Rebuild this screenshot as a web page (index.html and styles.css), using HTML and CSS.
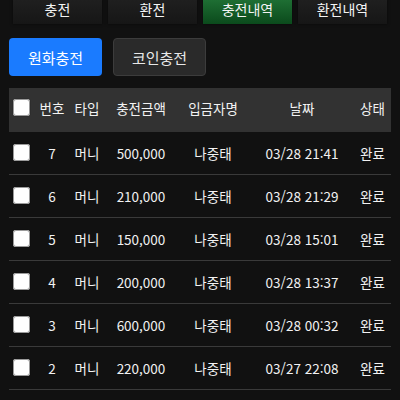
FILE: index.html
```html
<!DOCTYPE html>
<html lang="ko">
<head>
<meta charset="utf-8">
<link rel="stylesheet" href="styles.css">
</head>
<body>
<nav class="tabs">
  <div class="tab">충전</div>
  <div class="tab">환전</div>
  <div class="tab active">충전내역</div>
  <div class="tab">환전내역</div>
</nav>
<div class="btns">
  <button class="btn btn-blue">원화충전</button>
  <button class="btn btn-dark">코인충전</button>
</div>
<div class="table">
  <div class="row head">
    <span class="cb"></span><span>번호</span><span>타입</span><span>충전금액</span><span>입금자명</span><span>날짜</span><span>상태</span>
  </div>
  <div class="row"><span class="cb"></span><span>7</span><span>머니</span><span>500,000</span><span>나중태</span><span>03/28 21:41</span><span>완료</span></div>
  <div class="row"><span class="cb"></span><span>6</span><span>머니</span><span>210,000</span><span>나중태</span><span>03/28 21:29</span><span>완료</span></div>
  <div class="row"><span class="cb"></span><span>5</span><span>머니</span><span>150,000</span><span>나중태</span><span>03/28 15:01</span><span>완료</span></div>
  <div class="row"><span class="cb"></span><span>4</span><span>머니</span><span>200,000</span><span>나중태</span><span>03/28 13:37</span><span>완료</span></div>
  <div class="row"><span class="cb"></span><span>3</span><span>머니</span><span>600,000</span><span>나중태</span><span>03/28 00:32</span><span>완료</span></div>
  <div class="row"><span class="cb"></span><span>2</span><span>머니</span><span>220,000</span><span>나중태</span><span>03/27 22:08</span><span>완료</span></div>
</div>
</body>
</html>
```
FILE: styles.css
```css
* { box-sizing: border-box; }
html, body { margin: 0; padding: 0; }
body {
  background: #111111;
  color: #f2f2f2;
  font-family: "Noto Sans CJK KR", "Noto Sans", sans-serif;
  font-size: 13.5px;
  width: 400px;
  height: 400px;
  overflow: hidden;
}
.tabs {
  display: flex;
  gap: 6px;
  padding: 0 13px;
}
.tab {
  width: 89px;
  height: 24px;
  line-height: 18px;
  text-align: center;
  font-size: 14px;
  color: #f4f4f4;
  background: linear-gradient(#1f1f1f, #161616);
  box-shadow: 0 0 3px rgba(0,0,0,0.6);
}
.tab.active {
  background: linear-gradient(#1e6e33, #0b4a1c);
}
.btns {
  display: flex;
  gap: 11px;
  padding: 14px 9px 0;
}
.btn {
  width: 93px;
  height: 38px;
  border-radius: 4px;
  font-family: inherit;
  font-size: 15px;
  color: #ffffff;
  padding: 0;
  cursor: pointer;
}
.btn-blue {
  background: #1a7bff;
  border: none;
}
.btn-dark {
  background: #2a2a2a;
  border: 1px solid #3c3c3c;
  color: #e8e8e8;
}
.table {
  margin: 12px 9px 0;
  width: 382px;
}
.row {
  display: grid;
  grid-template-columns: 27px 32px 38px 70px 74px 104px 37px;
  align-items: center;
  height: 43px;
  padding-bottom: 1px;
  border-bottom: 1px solid #3a3a3a;
  text-align: center;
  white-space: nowrap;
}
.row.head {
  height: 44px;
  padding-bottom: 5px;
  background: #323232;
  border-bottom: none;
}
.cb {
  display: block;
  width: 17px;
  height: 17px;
  margin-left: 4px;
  background: #ffffff;
  border-radius: 3px;
  box-shadow: inset 0 0 0 1px #9a9a9a, 0 0 1px #000;
}
```
